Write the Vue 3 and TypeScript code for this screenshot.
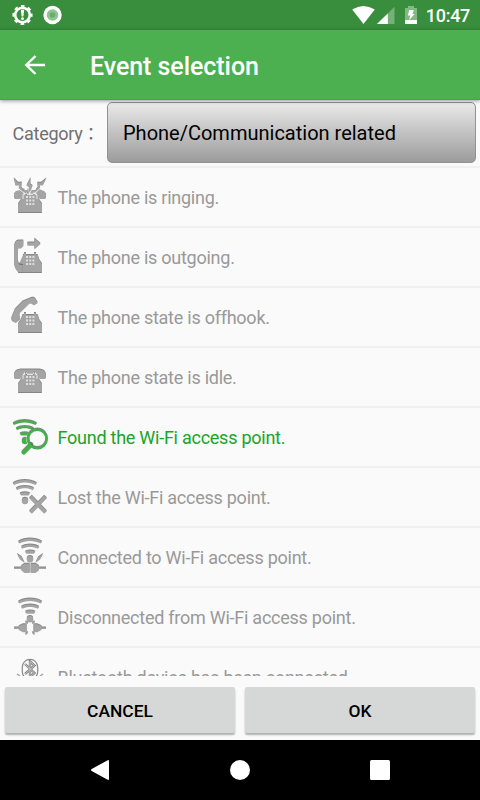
<script setup lang="ts">
interface EventRow {
  icon: string
  label: string
  active?: boolean
}

const rows: EventRow[] = [
  { icon: 'ringing', label: 'The phone is ringing.' },
  { icon: 'outgoing', label: 'The phone is outgoing.' },
  { icon: 'offhook', label: 'The phone state is offhook.' },
  { icon: 'idle', label: 'The phone state is idle.' },
  { icon: 'found', label: 'Found the Wi-Fi access point.', active: true },
  { icon: 'lost', label: 'Lost the Wi-Fi access point.' },
  { icon: 'connected', label: 'Connected to Wi-Fi access point.' },
  { icon: 'disconnected', label: 'Disconnected from Wi-Fi access point.' },
  { icon: 'bluetooth', label: 'Bluetooth device has been connected.' },
]

const phones = ['ringing', 'outgoing', 'offhook', 'idle']
</script>

<template>
  <div class="screen">
    <div class="status">
      <svg class="status-left" width="70" height="30" viewBox="0 0 70 30">
        <circle cx="22.5" cy="15" r="7.3" fill="none" stroke="#fff" stroke-width="2.6" />
        <circle cx="22.5" cy="15" r="9" fill="none" stroke="#fff" stroke-width="2.2" stroke-dasharray="3.6 3.469" stroke-dashoffset="1.8" />
        <path d="M20.8 9.8h3.4l-.8 6.6h-1.8z" fill="#fff" />
        <circle cx="22.5" cy="18.7" r="1.4" fill="#fff" />
        <circle cx="52.5" cy="15" r="9.2" fill="#fff" />
        <circle cx="52.5" cy="15" r="5.8" fill="#8fc492" />
        <circle cx="52.5" cy="15" r="2.8" fill="#6bac6f" />
      </svg>
      <div class="status-right">
        <svg width="72" height="30" viewBox="350 0 72 30">
          <path d="M352.2 9.6Q363.5 2.4 374.8 9.6L363.5 24z" fill="#fff" />
          <path d="M394.5 6.7V24H377z" fill="#76b079" />
          <path d="M387.8 13.4V24H377z" fill="#fff" />
          <path d="M405 8h3V6h6v2h3v12h-12z" fill="#83b985" />
          <path d="M405 20h12v4h-12z" fill="#fff" />
          <path d="M409.3 10h4.5l-1.3 4h2.2l-5.5 6 1-4.4h-2.4z" fill="#fff" />
        </svg>
        <span class="clock">10:47</span>
      </div>
    </div>

    <header class="toolbar">
      <svg class="back" width="24" height="24" viewBox="0 0 24 24">
        <path d="M22 12H3.5M12.5 3 3.3 12l9.2 9" fill="none" stroke="#fff" stroke-width="2.4" />
      </svg>
      <h1>Event selection</h1>
    </header>

    <div class="category">
      <span class="category-label">Category<span class="colon">：</span></span>
      <button class="spinner">Phone/Communication related</button>
    </div>

    <div class="list">
      <div v-for="row in rows" :key="row.icon" class="row" :class="{ active: row.active }">
        <svg class="icon" width="58" height="58" viewBox="0 0 58 58">
          <g v-if="phones.includes(row.icon)">
            <path class="relief" d="M24 25h2v2h8v-2h2v2h1.500c1 2 1.200 4.600 2.700 6.500L42 36v9H18v-9l1.800-2.500C21.500 31.500 21.500 29 22.700 27H24z" fill="currentColor" />
            <path d="M18.500 44.500h23" stroke="#858585" />
            <path d="M26 29h8.500M26 32.500h8.500M26 36h8.500" fill="none" stroke="#dedede" stroke-width="1.800" stroke-dasharray="2 1.200" />
          </g>

          <path v-if="row.icon === 'ringing' || row.icon === 'idle'" class="relief" d="M14 30v-2.500c0-4 3-6 8-6h16c5 0 8 2 8 6V30l-1 1h-5l-2.500-2v-3.200h-2.700V24h-1.300v1.800h-7V24h-1.300v1.800h-2.700V29L20 31h-5z" fill="currentColor" />
          <path v-if="row.icon === 'ringing' || row.icon === 'idle'" d="M23 31v-4.600h1.500v-2M35.500 24.400v2H37V31M27 26.400h6" fill="none" stroke="#ececec" />
          <g v-if="row.icon === 'ringing'">
            <path d="M13 19.500h9v2l-6 1.500-3 3zM24.500 20h3v2h-3zM32 20h4v2h-4zM41 19.500h6V26l-3-3-4-1.500z" fill="#fafafa" />
            <path d="M13.700 10.300l4.500 4.500 3.600-.3-.6 4.700 4.200 6.600-6.600-5.300.3-3.100-3.600.3zM30.500 10l-.2 6.300 2.300 1.600-3 7.200-.7-5.800-2.400-1.500zM46.500 10.300l-3.700 7.200-3.400-.1.700 2.700-6.500 6 4.200-6.800-.5-4.600 3.600.1z" fill="#fafafa" stroke="#fafafa" stroke-width="1.200" />
            <path class="relief" d="M13.700 10.300l4.500 4.500 3.600-.3-.6 4.700 4.200 6.600-6.600-5.300.3-3.100-3.600.3zM30.500 10l-.2 6.300 2.300 1.600-3 7.200-.7-5.800-2.400-1.500zM46.500 10.300l-3.700 7.200-3.400-.1.700 2.700-6.500 6 4.200-6.800-.5-4.600 3.600.1z" fill="currentColor" />
          </g>
          <g v-if="row.icon === 'outgoing'">
            <path d="M17.700 20h2L23 27l-3.300 7.500-2 .5z" fill="#fafafa" />
            <path class="relief" d="M18.300 12.500h5v5.700l-2.300 2.300h-2.500L17.700 22v11l1.500 3.500 3.600.5V44h-5C16 42 14 39 14 34V20c0-4 1.500-7 4.300-7.500z" fill="currentColor" />
            <path class="relief" d="M27.400 14.400h7v-3.800l6.200 5.400-6.200 5.400v-3.700h-7z" fill="currentColor" />
          </g>
          <path v-if="row.icon === 'offhook'" class="relief" d="M31.700 9.800c2-.2 3.400.5 3.900 1.700l2.100 3.500-3.700 2.600-3-2-1.900.3L19.500 25.500l-.2 2.700 1 3.300-4.400 3.500-3.500-1.500c-1.700-2-1.100-3.500-.4-5l3-7.200 7.600-7.700z" fill="currentColor" />

          <g v-if="row.icon === 'found' || row.icon === 'lost'" class="relief">
            <path d="M12.700 15.200c7-4.300 17-4.300 24.200 0l-1.400 1.900c-6.500-3.600-15-3.600-21.500 0zM15.800 20.300c5.300-3.200 13-3.200 18.200 0l-1.400 1.900c-4.500-2.500-11-2.500-15.500 0zM19.600 25.500c3.200-1.600 7.200-1.600 10.500 0l-1.600 2h-7.300z" fill="currentColor" />
            <circle cx="25" cy="33" r="3.200" fill="currentColor" />
          </g>
          <g v-if="row.icon === 'found'" fill="none" stroke="currentColor">
            <circle cx="37.300" cy="31" r="11" fill="#fafafa" stroke="none" />
            <path class="relief" d="M31 37l-7.300 7.500" stroke-width="4.300" stroke-linecap="round" />
            <circle class="relief" cx="37.300" cy="31" r="9.300" stroke-width="2.600" />
          </g>
          <g v-if="row.icon === 'lost'" fill="none">
            <path d="M30.500 29l15 15.500M45.500 29l-15 15.500" stroke="#fafafa" stroke-width="6" />
            <path class="relief" d="M30.500 29l15 15.500M45.500 29l-15 15.500" stroke="currentColor" stroke-width="3.800" />
          </g>

          <g v-if="row.icon === 'connected' || row.icon === 'disconnected'" class="relief" fill="currentColor">
            <path d="M18 13.700c7-4.300 17-4.300 24.200 0l-1.400 1.900c-6.500-3.600-15-3.600-21.500 0zM21 18.900c5.300-3.200 13-3.200 18.200 0l-1.400 1.900c-4.500-2.500-11-2.500-15.500 0zM25 23.800c3.200-1.600 7.200-1.600 10.500 0l-1.600 2h-7.500z" />
            <circle cx="30" cy="31.200" r="3.200" />
          </g>
          <g v-if="row.icon === 'connected'" class="relief" fill="currentColor">
            <path d="M16.800 25.800l4.900 3.500 2.900 5.700-4.700-3.500zM43.200 25.800l-4.900 3.500-2.900 5.700 4.700-3.500z" />
            <path d="M14 39.500h7.300V38l3.200-2.300h5.100v9.200h-5.100l-3.200-2.500V41H14zM30.600 35.700h4.900l3.400 2.300v1.500H46V41h-7.100v1.400l-3.400 2.500h-4.900z" />
          </g>
          <g v-if="row.icon === 'disconnected'" class="relief" fill="currentColor">
            <path d="M14 39.500h4.700v-1.200l4.200-2.100h3.700v8.100h-3.700L18.700 42v-1H14zM33.500 36.200h3.800l4.200 2.100v1.200H46V41h-4.500v1l-4.200 2.300h-3.800z" />
            <path d="M25.500 33.800l2.200 2M34.500 33.800l-2.200 2M27.700 44.500l-2.200 2M32.300 44.500l2.200 2" fill="none" stroke="currentColor" stroke-width="1.400" />
          </g>
          <g v-if="row.icon === 'bluetooth'" fill="none" stroke="currentColor">
            <rect x="22.300" y="11.300" width="15.400" height="20" rx="7.700" stroke="#8a8a8a" stroke-width="1.200" />
            <path d="M25 16l9.500 9-4.500 4V13.500l4.500 4L25 26" stroke="#858585" stroke-width="2.400" />
            <path d="M25 16l9.500 9-4.500 4V13.500l4.500 4L25 26" stroke="#c4c4c4" stroke-width="1" />
            <path d="M17 26l3 2M43 26l-3 2" stroke-width="1.500" />
          </g>
        </svg>
        <span>{{ row.label }}</span>
      </div>
    </div>

    <div class="actions">
      <button>CANCEL</button>
      <button>OK</button>
    </div>

    <nav class="navbar">
      <svg width="480" height="60" viewBox="0 0 480 60" fill="#fff">
        <path d="M107.200 20.500Q109 19.500 109 21v18q0 1.500-1.800.5L91.700 31q-1.500-1 0-2z" />
        <circle cx="240" cy="30" r="10" />
        <rect x="370" y="20" width="20" height="20" rx="1.500" />
      </svg>
    </nav>
  </div>
</template>

<style>
body {
  margin: 0;
  background: #fafafa;
}
</style>

<style scoped>
.screen {
  width: 480px;
  height: 800px;
  display: flex;
  flex-direction: column;
  overflow: hidden;
  background: #fafafa;
  font-family: Roboto, "Noto Sans CJK JP", sans-serif;
}
.status {
  flex: none;
  height: 30px;
  display: flex;
  justify-content: space-between;
  background: #388e3c;
}
.status-right {
  display: flex;
  padding-right: 10px;
}
.clock {
  width: 48px;
  text-align: right;
  font-size: 18px;
  letter-spacing: -0.3px;
  font-weight: 500;
  line-height: 32px;
  color: #fff;
  white-space: nowrap;
}
.toolbar {
  flex: none;
  height: 70px;
  box-sizing: border-box;
  display: flex;
  align-items: center;
  padding-left: 23px;
  background: #4caf50;
  border-bottom: 1px solid #3fa644;
  box-shadow: 0 1px 4px rgba(0, 0, 0, 0.4);
  z-index: 1;
}
h1 {
  margin: 5px 0 0 43px;
  font-size: 25px;
  letter-spacing: -0.06px;
  font-weight: 500;
  line-height: 30px;
  color: #fff;
}
.category {
  flex: none;
  height: 68px;
  box-sizing: border-box;
  display: flex;
  padding: 2px 4px 3px 12.5px;
  border-bottom: 2px solid #f0f0f0;
}
.category-label {
  width: 94.5px;
  font-size: 18px;
  letter-spacing: -0.25px;
  line-height: 63px;
  color: #707070;
  white-space: nowrap;
}
.colon {
  font-size: 17px;
}
.spinner {
  flex: 1;
  height: 61px;
  box-sizing: border-box;
  padding: 1px 0 0 15px;
  border: 1px solid #929292;
  border-radius: 5px;
  background: linear-gradient(#e9e9e9, #9c9c9c);
  font-family: inherit;
  font-size: 20px;
  text-align: left;
  color: #000;
}
.list {
  flex: none;
  height: 508px;
  overflow: hidden;
}
.row {
  display: flex;
  align-items: center;
  height: 60px;
  box-sizing: border-box;
  border-bottom: 2px solid #f0f0f0;
  font-size: 18px;
  letter-spacing: -0.25px;
  color: #999;
  white-space: nowrap;
}
.icon {
  flex: none;
  color: #a4a4a4;
}
.row span {
  padding-top: 1px;
  margin-left: -0.5px;
}
.relief {
  filter: drop-shadow(0 -0.6px 0 rgba(70, 70, 70, 0.65));
}
.active {
  color: #18a52a;
}
.active .icon {
  color: #43b04b;
}
.actions {
  flex: none;
  height: 64px;
  box-sizing: border-box;
  display: flex;
  gap: 10px;
  padding: 11px 5px 0;
}
.actions button {
  flex: 1;
  height: 46px;
  padding: 1px 0 0;
  border: 0;
  border-radius: 2px;
  background: #d6d7d7;
  box-shadow: 0 2px 2px rgba(0, 0, 0, 0.3);
  font-family: inherit;
  font-size: 17.4px;
  font-weight: 500;
  color: #000;
}
.navbar {
  flex: none;
  height: 60px;
  background: #000;
}
.navbar svg {
  display: block;
}
</style>
